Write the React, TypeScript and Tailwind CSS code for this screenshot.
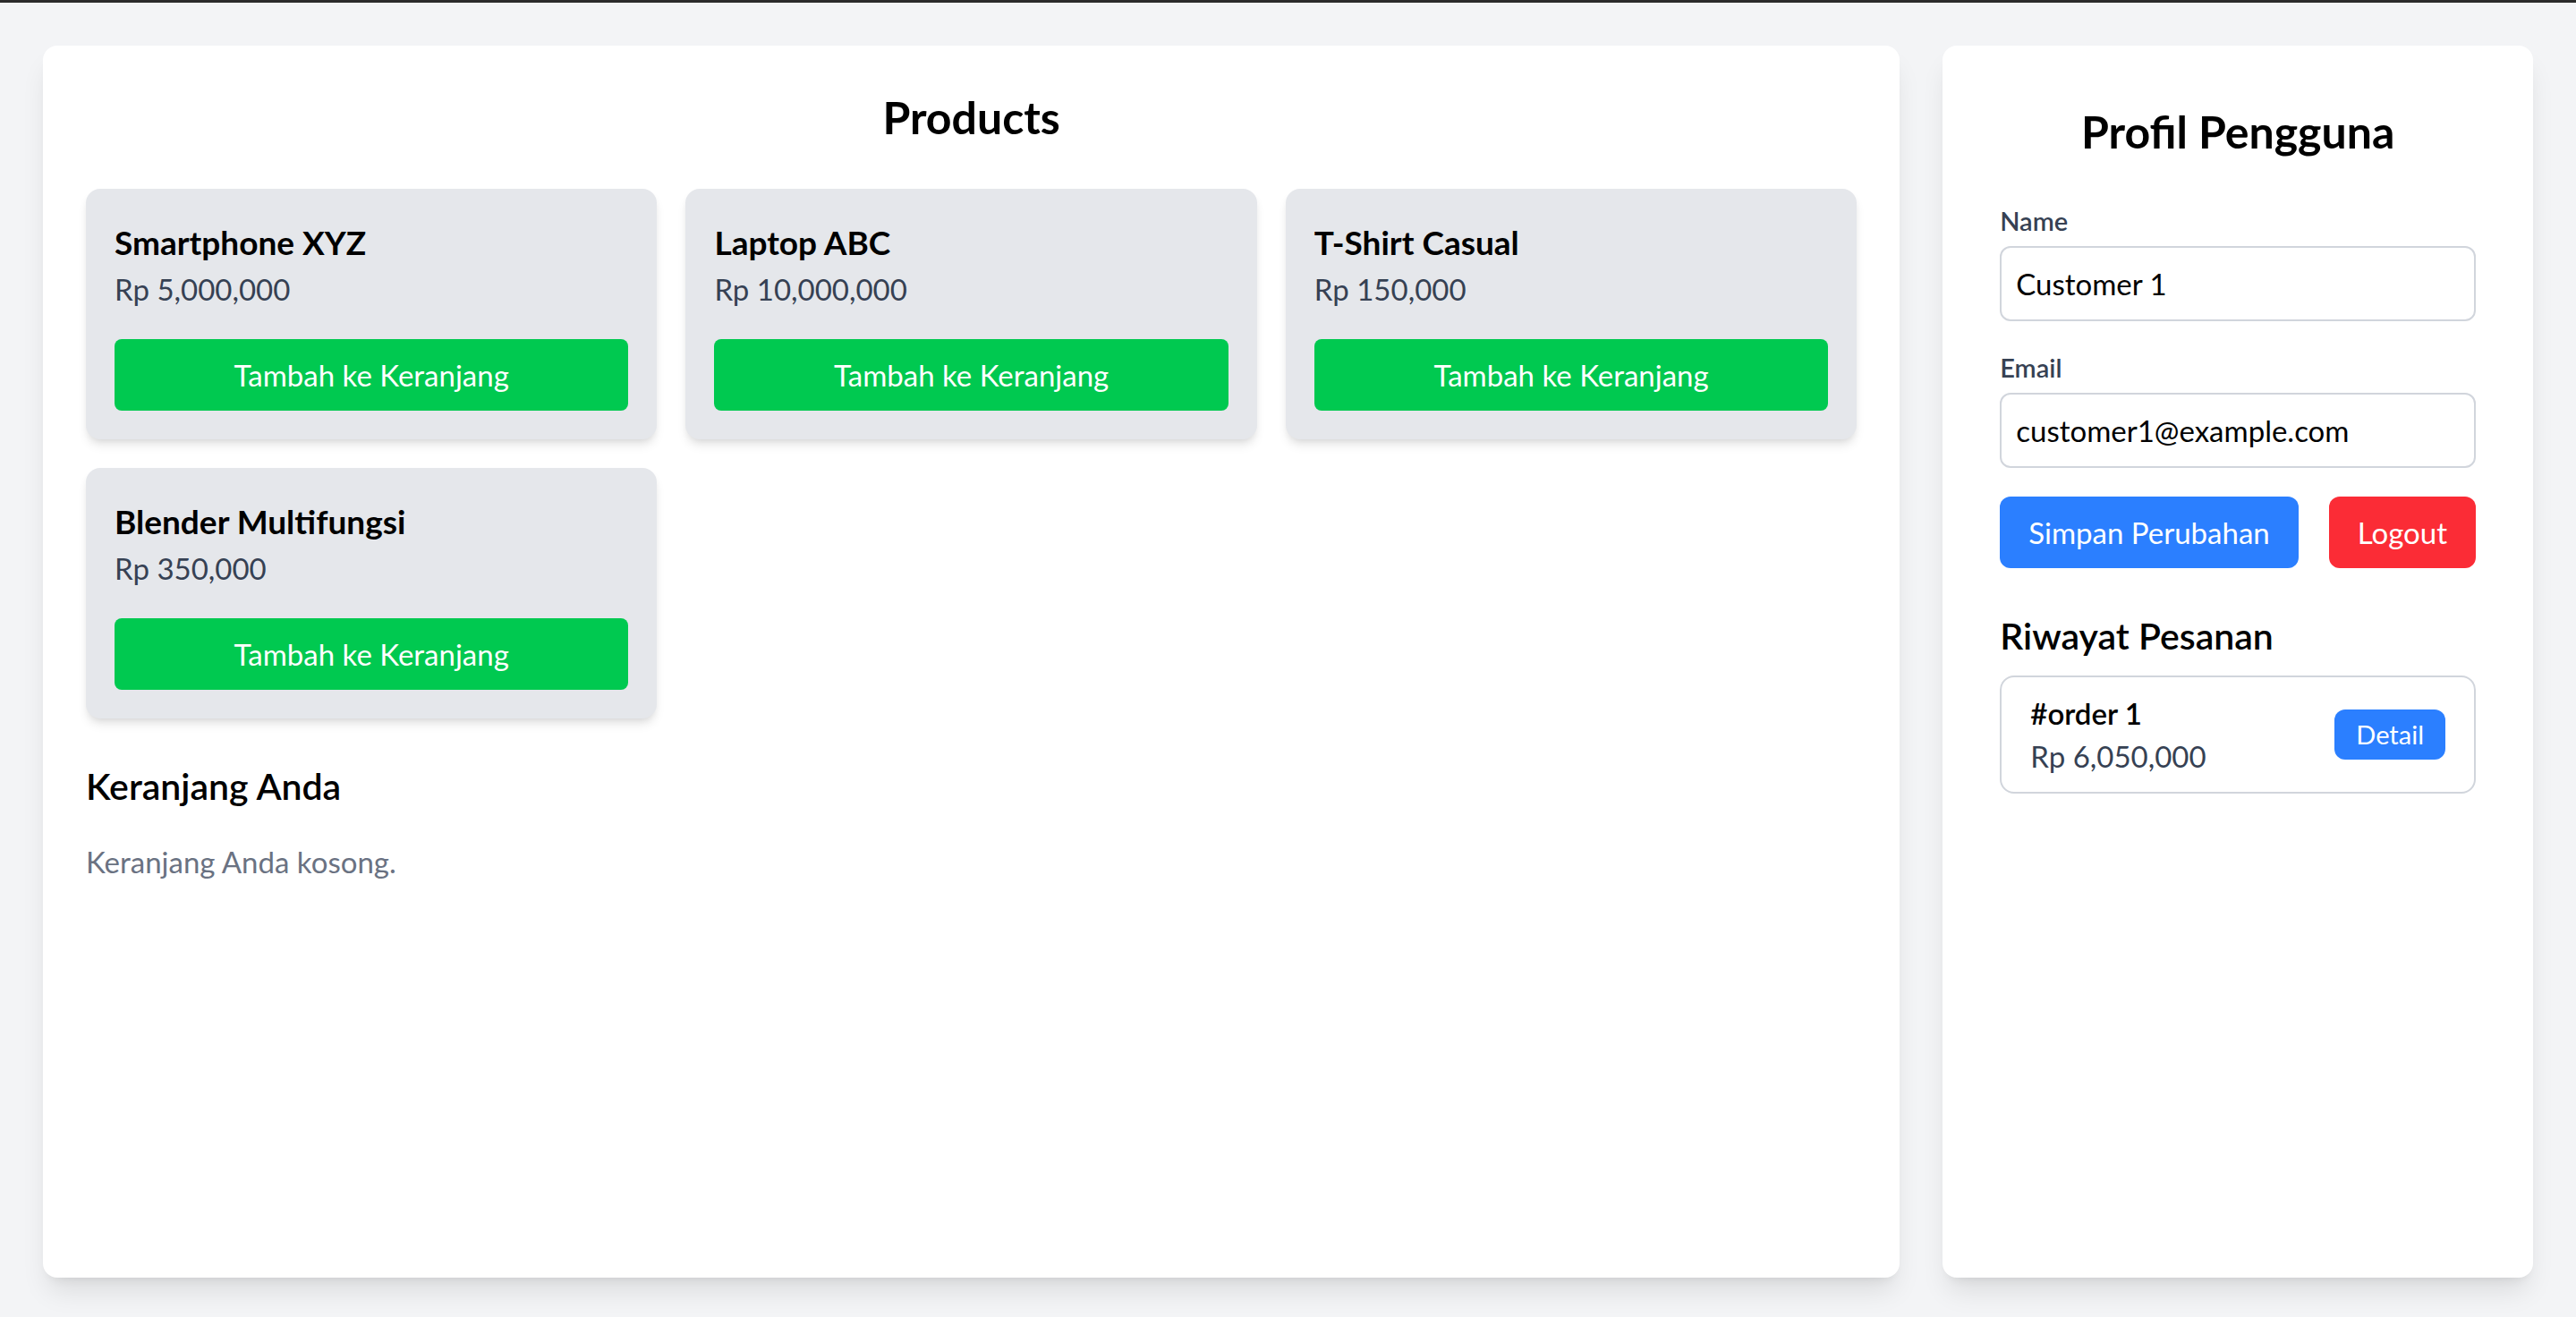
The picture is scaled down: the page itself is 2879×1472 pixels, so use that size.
import React from "react";

const products = [
  { name: "Smartphone XYZ", price: "Rp 5,000,000" },
  { name: "Laptop ABC", price: "Rp 10,000,000" },
  { name: "T-Shirt Casual", price: "Rp 150,000" },
  { name: "Blender Multifungsi", price: "Rp 350,000" },
];

export default function App() {
  return (
    <div className="min-h-screen bg-[#f3f4f6] font-['Lato',sans-serif] text-black">
      <div className="h-[3px] bg-[#2b2b2b]" />
      <div className="grid grid-cols-4 gap-12 p-12">
        <main className="col-span-3 h-[1377px] rounded-2xl bg-white p-12 shadow-[0_20px_30px_-6px_rgba(0,0,0,0.1),0_8px_12px_-8px_rgba(0,0,0,0.1)]">
          <h1 className="mb-12 text-center text-[50px] font-bold leading-[64px]">Products</h1>
          <div className="grid grid-cols-3 gap-8">
            {products.map((p) => (
              <div
                key={p.name}
                className="rounded-2xl bg-[#e5e7eb] p-8 shadow-[0_8px_12px_-2px_rgba(0,0,0,0.1),0_4px_8px_-4px_rgba(0,0,0,0.1)]"
              >
                <h2 className="text-[37px] font-bold leading-[56px]">{p.name}</h2>
                <p className="text-[33px] leading-[48px] text-[#364153]">{p.price}</p>
                <button className="mt-8 w-full rounded-lg bg-[#00c950] py-4 text-[33px] leading-[48px] text-white">
                  Tambah ke Keranjang
                </button>
              </div>
            ))}
          </div>
          <h2 className="mb-8 mt-12 text-[41px] font-semibold leading-[56px]">Keranjang Anda</h2>
          <p className="text-[33px] leading-[48px] text-[#6a7282]">Keranjang Anda kosong.</p>
        </main>

        <aside className="rounded-2xl bg-white p-16 shadow-[0_20px_30px_-6px_rgba(0,0,0,0.1),0_8px_12px_-8px_rgba(0,0,0,0.1)]">
          <h1 className="mb-12 text-center text-[50px] font-bold leading-[64px]">Profil Pengguna</h1>
          <div className="mb-8">
            <label className="mb-2 block text-[29px] font-semibold leading-[40px] text-[#364153]">Name</label>
            <input
              readOnly
              value="Customer 1"
              className="w-full rounded-xl border-2 border-[#d1d5dc] px-4 py-4 text-[33px] leading-[48px] text-black outline-none"
            />
          </div>
          <div className="mb-8">
            <label className="mb-2 block text-[29px] font-semibold leading-[40px] text-[#364153]">Email</label>
            <input
              readOnly
              value="customer1@example.com"
              className="w-full rounded-xl border-2 border-[#d1d5dc] px-4 py-4 text-[33px] leading-[48px] text-black outline-none"
            />
          </div>
          <div className="flex justify-between">
            <button className="rounded-xl bg-[#2b7fff] px-8 py-4 text-[33px] leading-[48px] text-white">
              Simpan Perubahan
            </button>
            <button className="rounded-xl bg-[#fb2c36] px-8 py-4 text-[33px] leading-[48px] text-white">
              Logout
            </button>
          </div>
          <h2 className="mb-4 mt-12 text-[41px] font-semibold leading-[56px]">Riwayat Pesanan</h2>
          <div className="flex items-center justify-between rounded-2xl border-2 border-[#d1d5dc] px-8 py-4">
            <div>
              <p className="text-[33px] font-semibold leading-[48px]">#order 1</p>
              <p className="text-[33px] leading-[48px] text-[#364153]">Rp 6,050,000</p>
            </div>
            <button className="rounded-xl bg-[#2b7fff] px-6 py-2 text-[29px] leading-[40px] text-white">
              Detail
            </button>
          </div>
        </aside>
      </div>
    </div>
  );
}
